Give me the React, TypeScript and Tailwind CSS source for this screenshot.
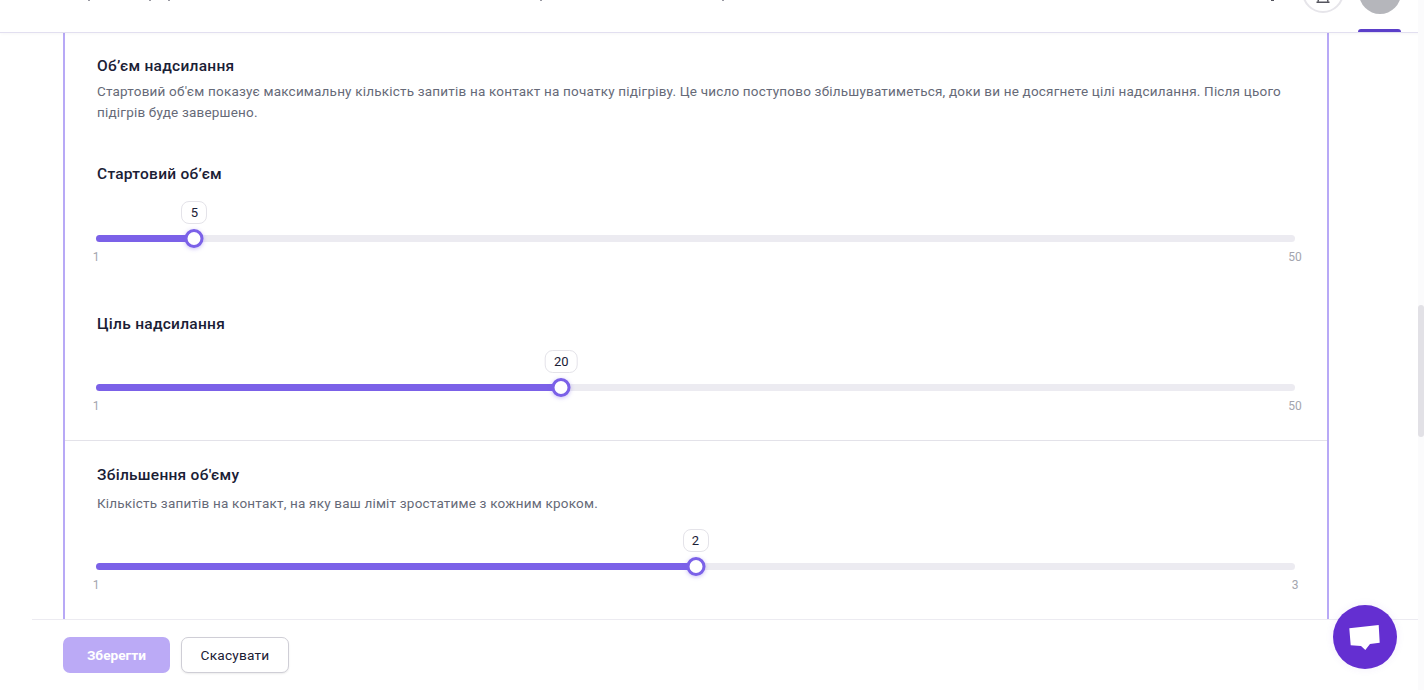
const font = "font-['Roboto','Inter',sans-serif]";

type SliderProps = {
  value: number;
  min: number;
  max: number;
  fill: number;
};

function Slider({ value, min, max, fill }: SliderProps) {
  const percent = `${fill}%`;
  return (
    <div>
      <div className="relative h-[7px] rounded-full bg-[#ecebf1]">
        <div className="h-full rounded-full bg-[#7b61e8]" style={{ width: percent }} />
        <div
          className="absolute top-[-6px] h-[19px] w-[19px] -translate-x-1/2 rounded-full border-[3px] border-[#7b61e8] bg-white shadow-[0_1px_4px_rgba(123,97,232,0.4)]"
          style={{ left: percent }}
        />
        <div
          className="absolute top-[-34px] flex h-[23px] min-w-[26px] -translate-x-1/2 items-center justify-center rounded-[8px] border border-[#e4e3e9] bg-white px-[8px] text-[13px] text-[#1a2035]"
          style={{ left: percent }}
        >
          {value}
        </div>
      </div>
      <div className="mt-[9px] flex justify-between text-[12px] leading-[13px] text-[#a3a5ae]">
        <span className="flex w-0 justify-center">{min}</span>
        <span className="flex w-0 justify-center">{max}</span>
      </div>
    </div>
  );
}

const heading = "pl-[1px] text-[15.5px] leading-[20px] font-medium tracking-[0.27px] text-[#1a2035]";
const body = "pl-[1px] text-[13.5px] leading-[21px] tracking-[0.195px] text-[#666a78]";

export default function App() {
  return (
    <div className={`relative flex h-[690px] flex-col overflow-hidden bg-white ${font}`}>
      <header className="relative flex h-[33px] shrink-0 items-start justify-between border-b border-[#e2dff0] pr-[23px] shadow-[0_1px_3px_rgba(0,0,0,0.03)]">
        {/* bottoms of the nav labels, scrolled out of view */}
        <div className="absolute top-0 left-[88px] h-[1px] w-[2px] bg-[#9a9aa3]" />
        <div className="absolute top-0 left-[149px] h-[1px] w-[2px] bg-[#9a9aa3]" />
        <div className="absolute top-0 left-[168px] h-[1px] w-[2px] bg-[#9a9aa3]" />
        <div className="absolute top-0 left-[540px] h-[1px] w-[2px] bg-[#9a9aa3]" />
        <div className="absolute top-0 left-[722px] h-[1px] w-[2px] bg-[#9a9aa3]" />
        <div className="absolute top-0 left-[1271px] h-[1px] w-[3px] bg-[#55555e]" />
        <div className="ml-auto flex items-start gap-[14px]">
          <div className="-mt-[29px] flex h-[42px] w-[42px] items-end justify-center rounded-full border-2 border-[#e6e5ea] bg-white pb-[8px]">
            <svg width="14" height="6" viewBox="0 0 14 6" fill="none" stroke="#55555e" strokeWidth="1.4">
              <path d="M3 0.5 2 4.5M11 0.5 12 4.5M0.5 5.3H13.5" />
            </svg>
          </div>
          <div className="flex h-[32px] w-[43px] flex-col justify-between">
            <div className="-mt-[28px] ml-[1px] h-[42px] w-[42px] rounded-full bg-[#b5b6bb]" />
            <div className="h-[3px] rounded-t-[3px] bg-[#5b3fc9]" />
          </div>
        </div>
      </header>

      <main className="min-h-0 flex-1 pl-[63px] pr-[95px]">
        <div className="h-full overflow-hidden border-x-2 border-[#b8a9f6]">
          <section className="h-[408px] border-b border-[#e3e2e9] pr-[32px] pl-[31px] pt-[23px]">
            <h2 className={heading}>Об’єм надсилання</h2>
            <p className={`mt-[5px] ${body}`}>
              Стартовий об'єм показує максимальну кількість запитів на контакт на початку підігріву. Це число поступово
              збільшуватиметься, доки ви не досягнете цілі надсилання. Після цього підігрів буде завершено.
            </p>
            <h3 className={`mt-[41px] ${heading}`}>Стартовий об’єм</h3>
            <div className="mt-[51px]">
              <Slider value={5} min={1} max={50} fill={8.2} />
            </div>
            <h3 className={`mt-[50px] ${heading}`}>Ціль надсилання</h3>
            <div className="mt-[50px]">
              <Slider value={20} min={1} max={50} fill={38.8} />
            </div>
          </section>
          <section className="pr-[32px] pl-[31px] pt-[24px]">
            <h2 className={heading}>Збільшення об'єму</h2>
            <p className={`mt-[8px] ${body}`}>Кількість запитів на контакт, на яку ваш ліміт зростатиме з кожним кроком.</p>
            <div className="mt-[49px]">
              <Slider value={2} min={1} max={3} fill={50} />
            </div>
          </section>
        </div>
      </main>

      <footer className="ml-[32px] flex h-[71px] shrink-0 items-start gap-[11px] border-t border-[#ecebf1] pl-[31px] pt-[17px]">
        <button className="h-[36px] w-[107px] rounded-[7px] bg-[#bbaaf6] text-[13.7px] font-bold text-white">Зберегти</button>
        <button className="h-[36px] w-[108px] rounded-[7px] border border-[#cfced6] bg-white text-[13.7px] tracking-[0.2px] text-[#1a2035] shadow-[0_1px_2px_rgba(0,0,0,0.08)]">
          Скасувати
        </button>
      </footer>

      <div className="absolute top-0 right-0 h-full w-[6px] bg-[#fbfbfc]" />
      <div className="absolute top-[305px] right-0 h-[132px] w-[6px] rounded-full bg-[#e2e1e6]" />

      <div className="absolute top-[605px] left-[1333px] flex h-[64px] w-[64px] items-center justify-center rounded-full bg-[#642fd1] shadow-[0_0_8px_rgba(100,47,209,0.08)]">
        <svg width="32" height="28" viewBox="0 0 32 28" fill="#fff">
          <path d="M0.3 5.3 29.7 2 30.7 19.7 21 21 16.3 27 12 23 1.7 22.3z" />
        </svg>
      </div>
    </div>
  );
}
